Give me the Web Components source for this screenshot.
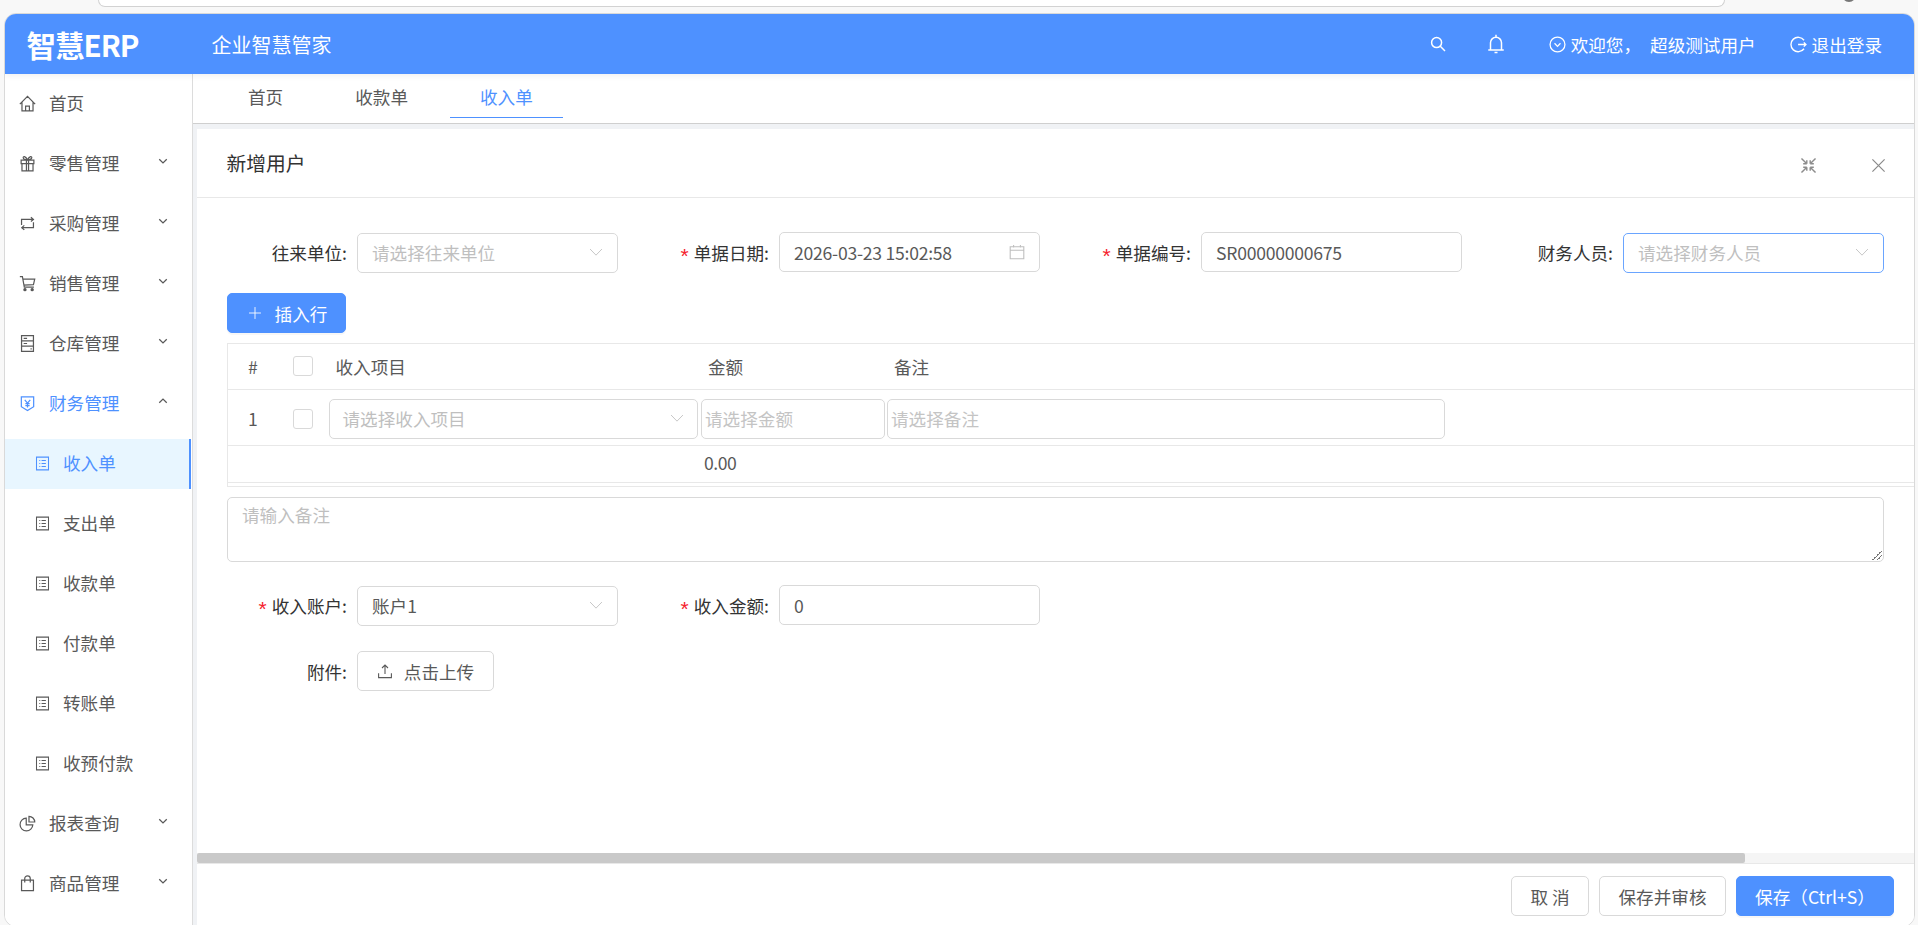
<!DOCTYPE html>
<html lang="zh-CN">
<head>
<meta charset="utf-8">
<title>智慧ERP</title>
<style>
  html, body { margin: 0; height: 100%; overflow: hidden; background: #f8f8f8; }
  body { font-family: "Noto Sans CJK SC", "Liberation Sans", sans-serif; }
</style>
</head>
<body>
<browser-strip></browser-strip>
<erp-app></erp-app>

<script>
const ICONS = {
  home: '<path d="M.8 8.6 8 1.2l7.2 7.4M2.8 6.8V15h10.4V6.8M6.2 15v-4.6h3.6V15"/>',
  gift: '<path d="M2 4.8h12v3.4H2zM2.8 8.2V15h10.4V8.2M7 4.8V15M9 4.8V15M8 4.6C6 .8 3.6 1 4 2.8c.3 1.4 2.3 1.8 4 1.8s3.7-.4 4-1.8C12.4 1 10 .8 8 4.6z"/>',
  swap: '<path d="M2.4 9.4V4.2h11M11.2 2.2l2.4 2-2.4 2M13.6 6.8v5.1H2.8M5 9.8l-2.4 2.1L5 14"/>',
  cart: '<path d="M.8 1.6h2.4L5 11.4h9M3.6 3.8h11.2l-1.2 5.2-9.2.6"/><circle cx="5.6" cy="13.8" r="1" style="fill:currentColor"/><circle cx="12.4" cy="13.8" r="1" style="fill:currentColor"/>',
  hdd: '<path d="M2.4.6h11.2v14.8H2.4zM2.4 5.6h11.2M2.4 10.4h11.2M4.4 3.1h3.2M4.4 8h3.2M10.8 13h1.2"/>',
  money: '<path d="M2.2 1.8h11.6V11L8 14.6 2.2 11zM5.4 4.6 8 7.6l2.6-3M8 7.6v4.2M6 8.2h4M6 10h4"/>',
  profile: '<path d="M1.6 1.2h12.8v13.6H1.6zM4.6 4.8h1M4.6 8h1M4.6 11.2h1M7 4.8h4.6M7 8h4.6M7 11.2h4.6"/>',
  pie: '<path d="M6.8 3A6 6 0 1 0 13 9.2H6.8zM9.4 1.2a5.4 5.4 0 0 1 5.4 5.4H9.4z"/>',
  bag: '<path d="M2.4 4.8h11.2v10H2.4zM5.4 7V3.4a2.6 2.6 0 0 1 5.2 0V7"/>',
  down: '<path d="M3 5.6 8 10.6l5-5"/>',
  up: '<path d="M3 10.4 8 5.4l5 5"/>',
  search: '<circle cx="6.6" cy="6.6" r="5"/><path d="m10.3 10.3 4.7 4.7"/>',
  bell: '<path d="M8 .6v1.6M3.6 12.4V7a4.4 4.4 0 0 1 8.8 0v5.4M1.8 12.8h12.4M6.8 14.8h2.4"/>',
  downcircle: '<circle cx="8" cy="8" r="7"/><path d="M5.2 6.8 8 9.8l2.8-3"/>',
  logout: '<path d="M13.2 4A6.8 6.8 0 1 0 13.2 12M7.6 8h7.4M13 6l2 2-2 2"/>',
  compress: '<path d="M6.4 6.4 1.4 1.4M6.4 6.4V3M6.4 6.4H3M9.6 6.4l5-5M9.6 6.4V3M9.6 6.4H13M6.4 9.6l-5 5M6.4 9.6V13M6.4 9.6H3M9.6 9.6l5 5M9.6 9.6V13M9.6 9.6H13"/>',
  close: '<path d="M1.5 1.5l13 13M14.5 1.5l-13 13"/>',
  calendar: '<path d="M1.2 2.8h13.6v12H1.2zM1.2 6.2h13.6M4.6 1v2.6M11.4 1v2.6"/>',
  upload: '<path d="M8 11V2.2M5 5l3-3 3 3M1.6 10.2v4.4h12.8v-4.4"/>',
  plus: '<path d="M8 1.2v13.6M1.2 8h13.6"/>',
  chevron: '<path d="M1.2 4.6 8 11.6l6.8-7"/>'
}

class UiIcon extends HTMLElement {
  connectedCallback() {
    const size = this.getAttribute('size') || 16
    const weight = this.getAttribute('weight') || 1.1
    this.attachShadow({ mode: 'open' })
    this.shadowRoot.innerHTML = `
      <style>
        :host { display: inline-flex; flex: none; width: ${size}px; height: ${size}px; }
        svg { width: 100%; height: 100%; fill: none; stroke: currentColor; stroke-width: ${weight}; }
      </style>
      <svg viewBox="0 0 16 16">${ICONS[this.getAttribute('name')]}</svg>
    `
  }
}
customElements.define('ui-icon', UiIcon)

class BrowserStrip extends HTMLElement {
  constructor() {
    super()
    this.attachShadow({ mode: 'open' })
    this.shadowRoot.innerHTML = `
      <style>
        :host { display: block; height: 13px; position: relative; overflow: hidden; }
        .address {
          height: 6px; margin-left: 98px; width: 1625px; background: #fff;
          border: 1px solid #d2d2d2; border-top: 0; border-radius: 0 0 12px 12px;
        }
        .avatar {
          position: absolute; left: 1842px; top: -12px; width: 14px; height: 14px;
          border-radius: 50%; background: #777;
        }
      </style>
      <div class="address"></div>
      <div class="avatar"></div>
    `
  }
}
customElements.define('browser-strip', BrowserStrip)

class ErpApp extends HTMLElement {
  constructor() {
    super()
    this.attachShadow({ mode: 'open' })
    this.shadowRoot.innerHTML = `
      <style>
        :host {
          display: flex; flex-direction: column; box-sizing: border-box;
          margin-left: 4px; width: 1911px; height: 914px; overflow: hidden;
          border: 1px solid #d9d9d9; border-radius: 12px; background: #fff;
        }
        .under { flex: 1; display: flex; min-height: 0; }
        .pane { flex: 1; min-width: 0; display: flex; flex-direction: column; background: #f0f2f5; }
        form-card { flex: 1; min-height: 0; margin: 5px 0 0 4px; }
      </style>
      <erp-header></erp-header>
      <div class="under">
        <erp-sidebar></erp-sidebar>
        <div class="pane">
          <erp-tabs></erp-tabs>
          <form-card></form-card>
        </div>
      </div>
    `
  }
}
customElements.define('erp-app', ErpApp)

class ErpHeader extends HTMLElement {
  constructor() {
    super()
    this.attachShadow({ mode: 'open' })
    this.shadowRoot.innerHTML = `
      <style>
        :host {
          display: flex; flex: none; align-items: center; height: 60px; background: #4e91ff; color: #fff;
          box-shadow: 0 2px 6px rgba(0, 0, 0, .06); position: relative; z-index: 2;
        }
        .logo { margin-left: 21.5px; width: 185px; font-size: 29.5px; font-weight: 700; letter-spacing: -1px; }
        .slogan { font-size: 20px; }
        .tools { margin-left: auto; margin-right: 32px; display: flex; align-items: center; font-size: 17.6px; }
        .user { display: flex; align-items: center; gap: 5px; }
      </style>
      <div class="logo">智慧ERP</div>
      <div class="slogan">企业智慧管家</div>
      <div class="tools">
        <ui-icon name="search" size="16" weight="1.5"></ui-icon>
        <ui-icon name="bell" size="20" weight="1.2" style="margin-left:40px"></ui-icon>
        <span class="user" style="margin-left:43px"><ui-icon name="downcircle" size="17" weight="1.2"></ui-icon><span>欢迎您，</span></span>
        <span style="margin-left:9px">超级测试用户</span>
        <span class="user" style="margin-left:34px"><ui-icon name="logout" size="17" weight="1.3"></ui-icon><span>退出登录</span></span>
      </div>
    `
  }
}
customElements.define('erp-header', ErpHeader)

class SideItem extends HTMLElement {
  constructor() {
    super()
    this.attachShadow({ mode: 'open' })
  }

  connectedCallback() {
    const arrow = this.getAttribute('arrow')
    const sub = this.hasAttribute('sub')
    this.shadowRoot.innerHTML = `
      <style>
        :host {
          display: flex; align-items: center; box-sizing: border-box; height: 50px; margin-bottom: 10px;
          padding: 0 0 3px ${sub ? 30 : 14}px; color: #595959; font-size: 17.6px; position: relative;
        }
        :host([open]) { color: #4e91ff; }
        :host([active]) { color: #4e91ff; background: #e8f6ff; border-right: 2px solid #4e91ff; }
        ui-icon { margin-top: 1px; }
        .label { margin-left: 13px; }
        .arrow { position: absolute; left: 152px; top: 16px; margin: 0; color: #595959; }
      </style>
      <ui-icon name="${this.getAttribute('icon')}" size="${sub ? 15 : 17}" weight="${sub ? 1.1 : 1.15}"></ui-icon>
      <span class="label"><slot></slot></span>
      ${arrow ? `<ui-icon class="arrow" name="${arrow}" size="12" weight="1.7"></ui-icon>` : ''}
    `
  }
}
customElements.define('side-item', SideItem)

class ErpSidebar extends HTMLElement {
  constructor() {
    super()
    this.attachShadow({ mode: 'open' })
    this.shadowRoot.innerHTML = `
      <style>
        :host {
          display: block; flex: none; box-sizing: border-box; width: 188px; padding: 5px 1px 0 0;
          background: #fff; border-right: 1px solid #dcdcdc;
        }
      </style>
      <side-item icon="home">首页</side-item>
      <side-item icon="gift" arrow="down">零售管理</side-item>
      <side-item icon="swap" arrow="down">采购管理</side-item>
      <side-item icon="cart" arrow="down">销售管理</side-item>
      <side-item icon="hdd" arrow="down">仓库管理</side-item>
      <side-item icon="money" arrow="up" open>财务管理</side-item>
      <side-item icon="profile" sub active>收入单</side-item>
      <side-item icon="profile" sub>支出单</side-item>
      <side-item icon="profile" sub>收款单</side-item>
      <side-item icon="profile" sub>付款单</side-item>
      <side-item icon="profile" sub>转账单</side-item>
      <side-item icon="profile" sub>收预付款</side-item>
      <side-item icon="pie" arrow="down">报表查询</side-item>
      <side-item icon="bag" arrow="down">商品管理</side-item>
    `
  }
}
customElements.define('erp-sidebar', ErpSidebar)

class ErpTabs extends HTMLElement {
  constructor() {
    super()
    this.attachShadow({ mode: 'open' })
    this.shadowRoot.innerHTML = `
      <style>
        :host {
          display: flex; flex: none; gap: 12px; box-sizing: border-box; height: 50px; padding-left: 25px;
          background: #fff; border-bottom: 1px solid #cfcfcf; font-size: 17.6px; color: #595959;
        }
        .tab { box-sizing: border-box; height: 44px; padding: 0 30px; line-height: 46px; }
        .on { color: #4e91ff; border-bottom: 1px solid #4e91ff; }
      </style>
      <div class="tab">首页</div>
      <div class="tab">收款单</div>
      <div class="tab on">收入单</div>
    `
  }
}
customElements.define('erp-tabs', ErpTabs)

class SelectBox extends HTMLElement {
  constructor() {
    super()
    this.attachShadow({ mode: 'open' })
    this.shadowRoot.innerHTML = `
      <style>
        :host {
          display: flex; align-items: center; box-sizing: border-box; height: 40px; padding: 0 14px;
          background: #fff; border: 1px solid #d9d9d9; border-radius: 5px; color: #595959; font-size: 17.6px;
        }
        :host([focused]) { border-color: #6aa5ff; }
        :host([empty]) { color: #bfbfbf; }
        span { flex: 1; margin-top: -2px; }
        ui-icon { color: #bfbfbf; margin-top: -2px; }
      </style>
      <span><slot></slot></span>
      <ui-icon name="chevron" size="14" weight="1"></ui-icon>
    `
  }
}
customElements.define('select-box', SelectBox)

class TextBox extends HTMLElement {
  constructor() {
    super()
    this.attachShadow({ mode: 'open' })
    this.shadowRoot.innerHTML = `
      <style>
        :host {
          display: flex; align-items: center; box-sizing: border-box; height: 40px; padding: 0 14px;
          background: #fff; border: 1px solid #d9d9d9; border-radius: 5px; color: #595959; font-size: 17.6px;
          letter-spacing: -.25px;
        }
        :host([empty]) { color: #c4c4c4; letter-spacing: 0; padding: 0 3px 2px; }
        span { flex: 1; }
      </style>
      <span><slot></slot></span>
      <slot name="end"></slot>
    `
  }
}
customElements.define('text-box', TextBox)

class FormField extends HTMLElement {
  constructor() {
    super()
    this.attachShadow({ mode: 'open' })
  }

  connectedCallback() {
    const star = this.hasAttribute('required') ? '<i>*</i>' : ''
    this.shadowRoot.innerHTML = `
      <style>
        :host { display: flex; align-items: flex-start; }
        .label {
          flex: none; box-sizing: border-box; width: 130px; height: 40px; padding-right: 10px;
          display: flex; align-items: center; justify-content: flex-end;
          font-size: 17.6px; color: #333; white-space: nowrap;
        }
        i {
          font-style: normal; font-family: "Liberation Sans", sans-serif; font-size: 21px; line-height: 1;
          color: #f5222d; margin: 7px 5px 0 0;
        }
        ::slotted(*) { width: 261px; }
      </style>
      <div class="label">${star}${this.getAttribute('label')}:</div>
      <slot></slot>
    `
  }
}
customElements.define('form-field', FormField)

class ErpButton extends HTMLElement {
  constructor() {
    super()
    this.attachShadow({ mode: 'open' })
    this.shadowRoot.innerHTML = `
      <style>
        :host {
          display: inline-flex; align-items: center; justify-content: center; box-sizing: border-box; height: 40px;
          background: #fff; border: 1px solid #d9d9d9; border-radius: 5px; color: #595959; font-size: 17.6px;
        }
        :host([primary]) { background: #4e91ff; border-color: #4e91ff; color: #fff; box-shadow: 0 2px 0 rgba(0, 0, 0, .03); }
      </style>
      <slot></slot>
    `
  }
}
customElements.define('erp-button', ErpButton)

class LineTable extends HTMLElement {
  constructor() {
    super()
    this.attachShadow({ mode: 'open' })
    this.shadowRoot.innerHTML = `
      <style>
        :host {
          display: block; box-sizing: border-box; height: 144px; color: #595959; font-size: 17.6px;
          border: 1px solid #e8e8e8; border-right: 0;
        }
        .row {
          display: grid; grid-template-columns: 65px 35.5px 372.5px 186px 1fr; align-items: center;
          box-sizing: border-box; border-bottom: 1px solid #e8e8e8;
        }
        .head { height: 46px; padding-bottom: 1px; }
        .body { height: 56px; padding-top: 3px; }
        .body .no { margin-top: -2px; }
        .sum { height: 37px; padding-bottom: 3px; }
        .no { padding-left: 20px; }
        .box { width: 20px; height: 20px; box-sizing: border-box; background: #fff; border: 1px solid #d9d9d9; border-radius: 3px; }
        .cap { padding-left: 7px; }
        select-box { padding: 0 13px; }
        text-box.note { width: 558px; }
        text-box.amount { width: 184px; }
      </style>
      <div class="row head">
        <div class="no">#</div>
        <div class="box"></div>
        <div class="cap">收入项目</div>
        <div class="cap">金额</div>
        <div class="cap">备注</div>
      </div>
      <div class="row body">
        <div class="no">1</div>
        <div class="box"></div>
        <select-box empty style="width:369px">请选择收入项目</select-box>
        <text-box empty class="amount">请选择金额</text-box>
        <text-box empty class="note">请选择备注</text-box>
      </div>
      <div class="row sum">
        <div></div><div></div><div></div>
        <div style="padding-left:3px;letter-spacing:-.5px">0.00</div>
        <div></div>
      </div>
    `
  }
}
customElements.define('line-table', LineTable)

class FormCard extends HTMLElement {
  constructor() {
    super()
    this.attachShadow({ mode: 'open' })
    this.shadowRoot.innerHTML = `
      <style>
        :host { display: flex; flex-direction: column; background: #fff; }
        .top {
          flex: none; display: flex; align-items: center; box-sizing: border-box; height: 69px; padding: 0 0 2px 29.5px;
          border-bottom: 1px solid #e8e8e8; font-size: 19.8px; color: #333;
        }
        .top ui-icon { color: #8c8c8c; margin-top: 7px; }
        .body { flex: 1; min-height: 0; overflow: hidden; padding: 34px 30px 0; }
        .fields { display: grid; grid-template-columns: repeat(4, 391px); column-gap: 31px; }
        .drop { margin-top: 1px; }
        .add { display: flex; width: 119px; margin-top: 20px; gap: 13px; }
        .add ui-icon { margin-left: 2px; }
        line-table { margin: 10px -30px 10px 0; }
        .remark {
          box-sizing: border-box; height: 65px; padding: 4px 14px; position: relative;
          border: 1px solid #d9d9d9; border-radius: 5px; color: #bfbfbf; font-size: 17.6px;
        }
        .grip {
          position: absolute; right: 1px; bottom: 1px; width: 10px; height: 10px;
          background: linear-gradient(135deg, transparent 0 50%, #777 50% 58%, transparent 58% 72%, #777 72% 80%, transparent 80%);
        }
        .bar { flex: none; height: 10px; background: #f5f5f5; }
        .thumb { width: 1548px; height: 10px; border-radius: 2px; background: #c9c9c9; }
        .foot {
          flex: none; display: flex; justify-content: flex-end; gap: 10px; box-sizing: border-box; height: 63px;
          padding: 12px 20px 0 0; border-top: 1px solid #e8e8e8;
        }
      </style>
      <div class="top">
        <span>新增用户</span>
        <ui-icon name="compress" size="17" weight="1.35" style="margin-left:auto"></ui-icon>
        <ui-icon name="close" size="15" weight="1.3" style="margin-right:28px;margin-left:54px"></ui-icon>
      </div>
      <div class="body">
        <div class="fields">
          <form-field label="往来单位"><select-box empty class="drop">请选择往来单位</select-box></form-field>
          <form-field label="单据日期" required>
            <text-box>2026-03-23 15:02:58<ui-icon slot="end" name="calendar" size="16" style="color:#bfbfbf"></ui-icon></text-box>
          </form-field>
          <form-field label="单据编号" required><text-box>SR00000000675</text-box></form-field>
          <form-field label="财务人员"><select-box empty focused class="drop">请选择财务人员</select-box></form-field>
        </div>
        <erp-button primary class="add"><ui-icon name="plus" size="14" weight="1"></ui-icon><span>插入行</span></erp-button>
        <line-table></line-table>
        <div class="remark">请输入备注<div class="grip"></div></div>
        <div class="fields" style="margin-top:23px">
          <form-field label="收入账户" required><select-box class="drop">账户1</select-box></form-field>
          <form-field label="收入金额" required><text-box>0</text-box></form-field>
        </div>
        <div class="fields" style="margin-top:25px">
          <form-field label="附件">
            <erp-button style="width:137px;gap:11px"><ui-icon name="upload" size="16"></ui-icon><span>点击上传</span></erp-button>
          </form-field>
        </div>
      </div>
      <div class="bar"><div class="thumb"></div></div>
      <div class="foot">
        <erp-button style="width:78px">取 消</erp-button>
        <erp-button style="width:127px">保存并审核</erp-button>
        <erp-button primary style="width:158px">保存（Ctrl+S）</erp-button>
      </div>
    `
  }
}
customElements.define('form-card', FormCard)
</script>
</body>
</html>
